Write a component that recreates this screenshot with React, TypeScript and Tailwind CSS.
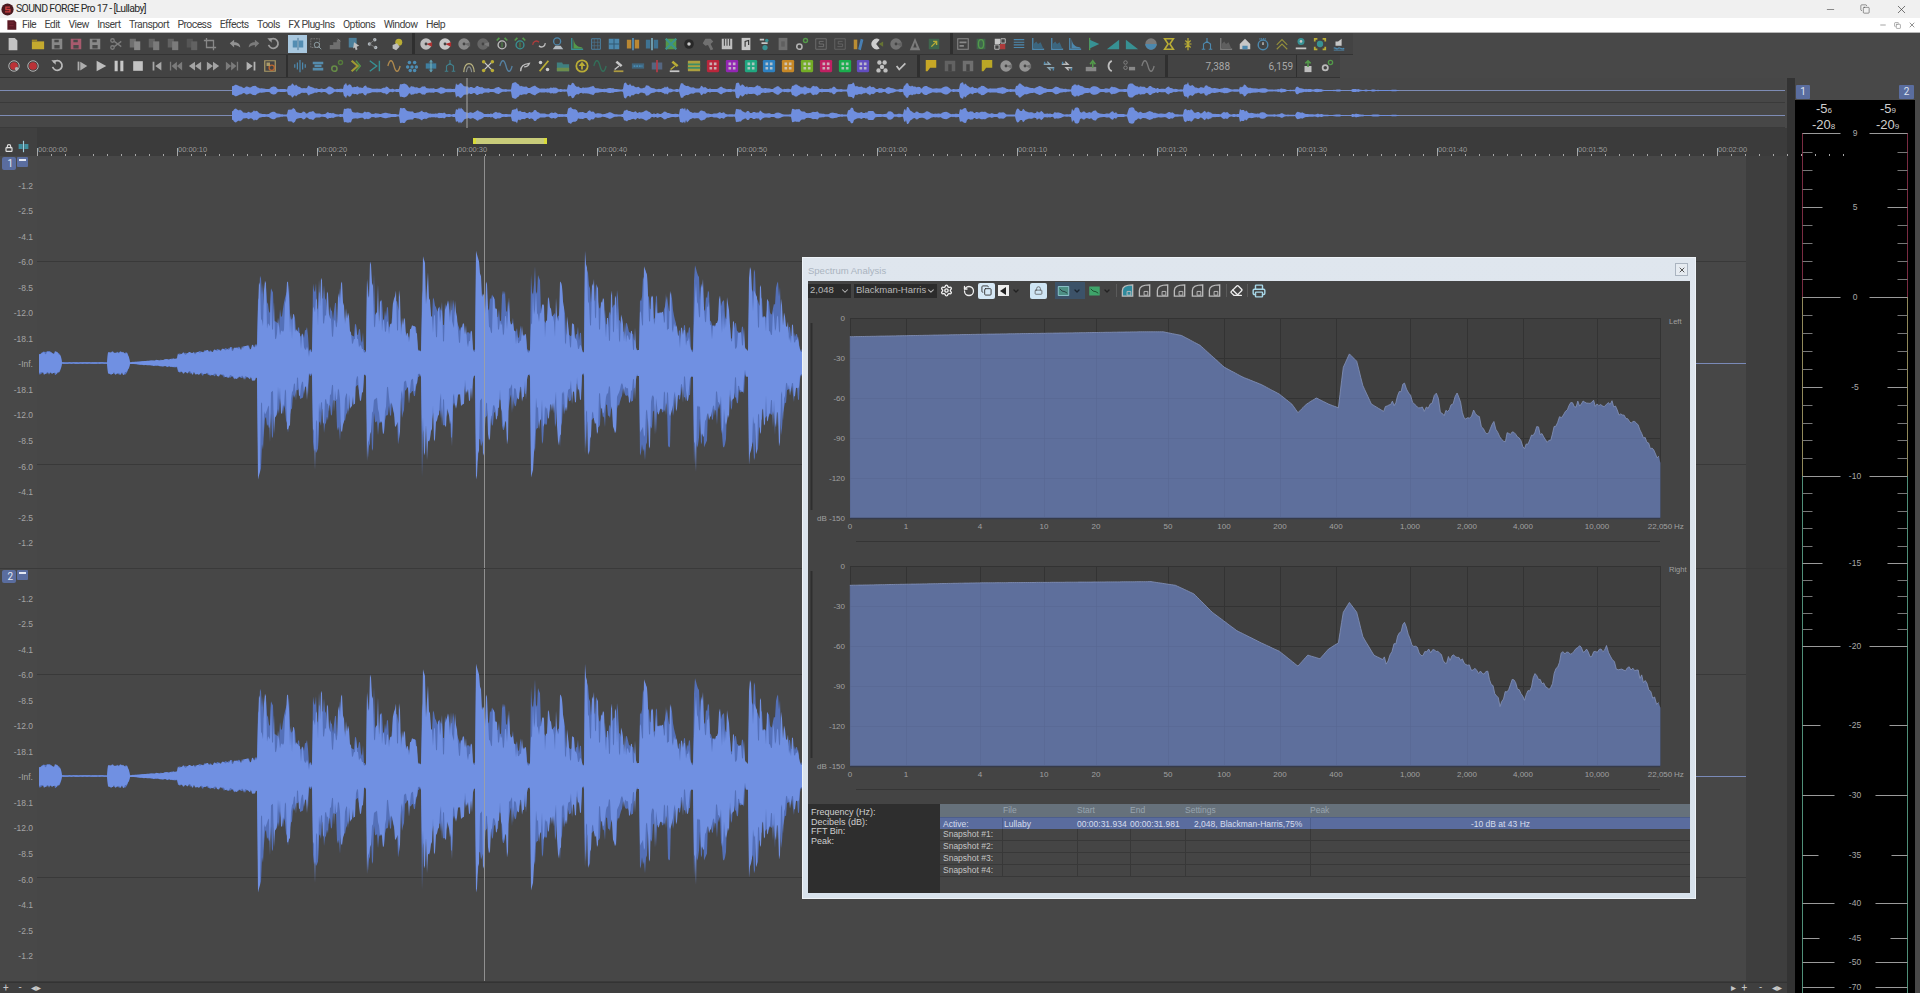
import type { ReactNode } from 'react'
import { ChevronDown, Copy, Eraser, Lock, Minus, Printer, RotateCcw, Settings, X } from 'lucide-react'

const menus = ['File', 'Edit', 'View', 'Insert', 'Transport', 'Process', 'Effects', 'Tools', 'FX Plug-Ins', 'Options', 'Window', 'Help']

const BLUE = '#4f9ac9'
const TEAL = '#35a5a8'
const GREEN = '#58b04c'
const YEL = '#d8c832'
const GRAY = '#8e8e8e'
const WHITE = '#e6e6e6'

function rng(seed: number) {
  let s = seed
  return () => {
    s = (s * 16807) % 2147483647
    return s / 2147483647
  }
}

// toolbar glyphs, drawn on a 16x16 box
function shape(k: string, c: string, d: string): ReactNode {
  const line = { fill: 'none', stroke: c, strokeWidth: 1.5 }
  switch (k) {
    case 'doc': return <path d="M3 1h7l3 3v11H3z" fill={c} />
    case 'folder': return <><path d="M1 5h14v9H1z" fill={c} /><path d="M1 3h6v2H1z" fill={d} /></>
    case 'save': return <><path d="M2 2h12v12H2z" fill={c} /><path d="M5 3h5v3H5zM5 9h6v4H5z" fill="#4a4a4a" /></>
    case 'cut': return <><circle cx="4" cy="4" r="2" {...line} /><circle cx="4" cy="12" r="2" {...line} /><path d="M6 5l8 6M6 11l8-6" {...line} /></>
    case 'pages': return <><path d="M2 2h7v10H2z" fill={d} /><path d="M7 5h7v10H7z" fill={c} /></>
    case 'crop': return <path d="M4 1v11h11M1 4h11v11" {...line} />
    case 'undo': return <path d="M2 7l5-4v3c4 0 7 2 7 6-2-2-4-3-7-3v3z" fill={c} />
    case 'redo': return <path d="M14 7L9 3v3c-4 0-7 2-7 6 2-2 4-3 7-3v3z" fill={c} />
    case 'loop': return <><path d="M4 4a5.500 5.500 0 1 1-1 5" fill="none" stroke={c} strokeWidth="2" /><path d="M1.500 1.500h5v5z" fill={c} /></>
    case 'split': return <><path d="M2 4h5v8H2zM9 4h5v8H9z" fill={c} /><path d="M8 1v14" stroke={d} /></>
    case 'search': return <><path d="M2 2h10v10H2z" fill="none" stroke={c} strokeDasharray="2 1" /><circle cx="9" cy="9" r="3" fill="none" stroke={d} /><path d="M11 11l3 3" stroke={d} /></>
    case 'steps': return <><path d="M2 14V9h4V6h4V3h4v11z" fill={c} /><path d="M11 2l3 3" stroke={d} /></>
    case 'boxarrow': return <><path d="M2 1h9v11H2z" fill={c} /><path d="M8 6l6 4-3 1 1 3-2 1-1-3-2 1z" fill={d} /></>
    case 'nodes': return <><circle cx="4" cy="8" r="2" fill={c} /><circle cx="10" cy="3" r="2" fill={c} /><circle cx="11" cy="12" r="2" fill={c} /><path d="M4 8l6-5M4 8l7 4" stroke={d} /></>
    case 'bulb': return <><circle cx="10" cy="6" r="4" fill={c} /><path d="M3 9l5-2 3 4-4 4-4-2z" fill={d} /></>
    case 'disc': return <><circle cx="8" cy="8" r="6.500" fill={c} /><path d="M8 8l7-2v5z" fill={d} /><circle cx="8" cy="8" r="1.600" fill="#444" /></>
    case 'wavebox': return <><path d="M2 4l3-3M14 4l-3-3" stroke={c} strokeWidth="2" /><circle cx="8" cy="9" r="4.500" fill="none" stroke={d} strokeWidth="1.500" /><path d="M8 6v6" stroke={c} /></>
    case 'arcs': return <><path d="M1 9a4 4 0 0 1 7-3" fill="none" stroke={c} strokeWidth="1.500" /><path d="M15 7a4 4 0 0 1-7 3" fill="none" stroke={d} strokeWidth="1.500" /></>
    case 'person': return <><circle cx="7" cy="5" r="4" fill="none" stroke={c} strokeWidth="1.500" /><path d="M2 14h12l-3-4H5z" fill={d} /></>
    case 'ramp': return <><path d="M2 1v13h13" {...line} /><path d="M4 2c1 7 4 9 10 10v1H4z" fill={d} /></>
    case 'grid': return <><path d="M3 2h10v12H3z" fill="none" stroke={c} /><path d="M6 2v12M10 2v12M3 6h10M3 10h10" stroke={d} strokeWidth=".8" /></>
    case 'block': return <><path d="M2 2h12v12H2z" fill={c} /><path d="M2 8h12M8 2v12" stroke={d} strokeWidth="1.200" /></>
    case 'wings': return <><path d="M1 3h5v10H1zM10 3h5v10h-5z" fill={c} /><path d="M8 1v14" stroke={d} strokeWidth="2" /></>
    case 'burst': return <path d="M8 1v14M5 4v8M11 4v8M2 6v4M14 6v4" stroke={c} strokeWidth="1.400" />
    case 'xbox': return <><path d="M2 2h12v12H2z" fill={d} /><path d="M2 2l12 12M14 2L2 14" stroke={c} strokeWidth="2.400" /></>
    case 'dot': return <><circle cx="8" cy="8" r="5.500" fill="#222" /><circle cx="8" cy="8" r="2" fill={c} /></>
    case 'figure': return <path d="M5 2h6l3 3-3 3 3 6-3 1-3-6-3 1-3-3z" fill={c} />
    case 'piano': return <><path d="M2 2h12v12H2z" fill={c} /><path d="M5 2v8M8 2v8M11 2v8" stroke="#444" strokeWidth="1.200" /></>
    case 'note': return <><path d="M3 1h10v14H3z" fill={c} /><path d="M7 11V5l4-1v5" fill="none" stroke="#333" strokeWidth="1.300" /></>
    case 'tree': return <><path d="M2 3h5M4 7h7" stroke={c} strokeWidth="2" /><circle cx="10" cy="4" r="2" fill={d} /><circle cx="8" cy="12" r="3" fill={d} /></>
    case 'chain': return <><circle cx="5" cy="11" r="3" fill="none" stroke={c} strokeWidth="1.800" /><circle cx="12" cy="4" r="2.300" fill="none" stroke={d} strokeWidth="1.600" /></>
    case 'sbox': return <><path d="M2 2h12v12H2z" fill="none" stroke={c} /><path d="M11 5H6v3h5v3H5" fill="none" stroke={c} /></>
    case 'gdoc': return <><path d="M3 1h10v14H3z" fill={c} /><path d="M6 5h4v6H6z" fill="#666" /></>
    case 'pencil': return <><path d="M2 3h4v11H2z" fill={c} /><path d="M7 14l3-12 3 1-3 12z" fill={d} /></>
    case 'pac': return <><path d="M11 3a6 6 0 1 0 0 10L7 8z" fill={c} /><path d="M10 8l5-3v6z" fill={d} /></>
    case 'atri': return <><path d="M8 1l6 14H2z" fill={c} /><path d="M8 6l2 6H6z" fill="#444" /></>
    case 'yelbox': return <><path d="M2 2h12v12H2z" fill={c} /><path d="M5 11l6-6M7 5h4v4" stroke={d} strokeWidth="1.600" fill="none" /></>
    case 'frame': return <><path d="M2 2h12v12H2z" fill="none" stroke={c} strokeWidth="1.200" /><path d="M4 5h8v2H4zM4 9h5v2H4z" fill={c} /></>
    case 'rings': return <><path d="M3 2h10v12H3z" fill={d} /><ellipse cx="8" cy="8" rx="3" ry="5" fill="none" stroke={c} strokeWidth="1.500" /></>
    case 'patch': return <><path d="M2 2h6v6H2z" fill={c} /><path d="M8 8h6v6H8z" fill={d} /><path d="M9 2h5v5H9zM2 9h5v5H2z" fill="none" stroke={c} /></>
    case 'hlines': return <path d="M2 3h12M2 6h12M2 9h12M2 12h12" stroke={c} strokeWidth="1.400" />
    case 'graph': return <><path d="M2 1v13h13" {...line} /><path d="M3 13V8l3-3 2 3 3-2 3 7z" fill={d} /></>
    case 'triright': return <><path d="M3 1v14" stroke={c} strokeWidth="1.500" /><path d="M3 3l11 5-11 5z" fill={d} /></>
    case 'up': return <path d="M1 14L15 3v11z" fill={c} />
    case 'down': return <path d="M1 3l14 11H1z" fill={c} />
    case 'half': return <><circle cx="8" cy="8" r="6.500" fill={c} /><path d="M1.500 8h13a6.500 6.500 0 0 1-13 0z" fill={d} /></>
    case 'hour': return <path d="M3 2h10l-4 6 4 6H3l4-6z" fill="none" stroke={c} strokeWidth="1.800" />
    case 'pinch': return <path d="M8 1v5M8 15v-5M4 8h8M5 4l3 3 3-3M5 12l3-3 3 3" fill="none" stroke={c} strokeWidth="1.400" />
    case 'house': return <><path d="M2 8l6-6 6 6v6H2z" fill={c} /><path d="M5 10h6v4H5z" fill={d} /></>
    case 'watch': return <><circle cx="8" cy="9" r="5.500" fill="none" stroke={c} strokeWidth="1.600" /><path d="M4 2h8" stroke={c} strokeDasharray="1 1" strokeWidth="2" /><path d="M8 6v3" stroke={d} strokeWidth="1.500" /></>
    case 'chev': return <path d="M2 9l6-6 6 6M2 14l6-6 6 6" fill="none" stroke={c} strokeWidth="1.300" />
    case 'man': return <><circle cx="8" cy="5" r="4" fill={d} /><path d="M2 12h12v2H2z" fill={c} /><circle cx="8" cy="5" r="1.500" fill={c} /></>
    case 'corners': return <><path d="M2 5V2h3M11 2h3v3M14 11v3h-3M5 14H2v-3" fill="none" stroke={c} strokeWidth="2" /><circle cx="8" cy="8" r="3.600" fill={d} /></>
    case 'speaker': return <><path d="M4 5h3l4-3v8H4z" fill={c} /><path d="M2 13c2-2 3 2 5 0s3 2 7 0" fill="none" stroke={d} strokeWidth="1.500" /><path d="M2 15h12" stroke={d} /></>
    case 'recs': return <><circle cx="8" cy="8" r="6" fill="none" stroke="#ddd" /><circle cx="8" cy="8" r="4.400" fill="#d92f35" /><circle cx="11" cy="11" r="2" fill="#ccc" /></>
    case 'rec': return <><circle cx="8" cy="8" r="6" fill="none" stroke="#ddd" /><circle cx="8" cy="8" r="4.400" fill="#d92f35" /></>
    case 'pstart': return <><path d="M3 3h2v10H3z" fill={c} /><path d="M6 3l8 5-8 5z" fill={c} /></>
    case 'play': return <path d="M3 2l11 6-11 6z" fill={c} />
    case 'pause': return <path d="M3 2h3.500v12H3zM9.500 2H13v12H9.500z" fill={c} />
    case 'stop': return <path d="M2.500 2.500h11v11h-11z" fill={c} />
    case 'first': return <path d="M3 3h2v10H3zM13 3v10L6 8z" fill={c} />
    case 'prevm': return <path d="M1 3h1.500v10H1zM9 3v10L3 8zM15 3v10L9 8z" fill={c} />
    case 'rew': return <path d="M8 3v10L1 8zM15 3v10L8 8z" fill={c} />
    case 'ff': return <path d="M8 3v10l7-5zM1 3v10l7-5z" fill={c} />
    case 'nextm': return <path d="M15 3h-1.500v10H15zM7 3v10l6-5zM1 3v10l6-5z" fill={c} />
    case 'last': return <path d="M13 3h-2v10h2zM3 3v10l7-5z" fill={c} />
    case 'boxo': return <><path d="M2 2h12v12H2z" fill="none" stroke={c} strokeWidth="1.400" /><circle cx="10" cy="10" r="3" fill="none" stroke="#d8702c" strokeWidth="1.600" /><path d="M4 4h4v4H4z" fill={c} /></>
    case 'bars': return <path d="M2 3h12v3H2zM2 10h12v3H2zM4 6.500h8V9H4z" fill={c} />
    case 'chevr': return <><path d="M3 2l7 6-7 6" fill="none" stroke={c} strokeWidth="2.400" /><path d="M8 2l5 6-5 6" fill="none" stroke={d} strokeWidth="1.400" /></>
    case 'rightbar': return <path d="M2 2l8 6-8 6M13 2v12" fill="none" stroke={c} strokeWidth="1.600" />
    case 'sine': return <path d="M1 8c2-8 5-8 7 0s5 8 7 0" fill="none" stroke={c} strokeWidth="1.500" />
    case 'dots': return <g fill={c}><circle cx="5" cy="4" r="2" /><circle cx="11" cy="4" r="2" /><circle cx="3" cy="9" r="2" /><circle cx="8" cy="9" r="2" /><circle cx="13" cy="9" r="2" /><circle cx="6" cy="13" r="2" /><circle cx="11" cy="13" r="2" /></g>
    case 'diamond': return <><path d="M8 1l3 3H5zM8 15l3-3H5z" fill={c} /><path d="M2 5h12v6H2z" fill={c} /><path d="M8 1v14" stroke="#9dd" /></>
    case 'fig2': return <path d="M8 1v4l4 3v6M8 5L4 8v6M2 14h4M10 14h4" fill="none" stroke={c} strokeWidth="1.300" />
    case 'arch': return <><path d="M2 15C3 2 13 2 14 15" fill="none" stroke={c} strokeWidth="1.300" /><path d="M5 15c1-8 5-8 6 0" fill="none" stroke={d} strokeWidth="1.300" /></>
    case 'xdots': return <g fill={c}><path d="M3 3l10 10M13 3L3 13" stroke={d} strokeWidth="1.600" /><circle cx="3" cy="3" r="2" /><circle cx="13" cy="13" r="2" /><circle cx="13" cy="3" r="2" /><circle cx="3" cy="13" r="2" /></g>
    case 'hook': return <path d="M3 14c0-6 3-8 10-9-1 3-3 4-6 4" fill="none" stroke={c} strokeWidth="1.600" />
    case 'percent': return <><path d="M3 14L13 2" stroke={c} strokeWidth="2" /><circle cx="4" cy="4" r="2" fill={d} /><circle cx="12" cy="12" r="2" fill={d} /></>
    case 'tfold': return <><path d="M1 4h6l1 2h7v8H1z" fill={c} /><path d="M1 10h14v4H1z" fill={d} /></>
    case 'upc': return <><circle cx="8" cy="8" r="6.500" fill="none" stroke={c} strokeWidth="2" /><path d="M8 3l4 5H9v4H7V8H4z" fill={c} /></>
    case 'gavel': return <><path d="M6 2l6 5-2 2-6-5z" fill={c} /><path d="M2 14h11" stroke={d} strokeWidth="2" /><path d="M8 8l-5 4" stroke={c} strokeWidth="1.500" /></>
    case 'bluebox': return <><path d="M1 5h14v6H1z" fill="#3f6f8f" /><path d="M3 8h10" stroke={c} strokeDasharray="2 1" strokeWidth="2" /></>
    case 'redbar': return <><path d="M2 4h12v8H2z" fill={d} /><path d="M8 1v14" stroke={c} strokeWidth="2" /></>
    case 'gbars': return <><path d="M1 2h14v12H1z" fill={c} /><path d="M1 6h14M1 10h14" stroke={d} strokeWidth="2" /></>
    case 'chip': return <><rect x="1" y="1" width="14" height="14" rx="1.500" fill={c} /><path d="M4 4h3v3H4zM9 4h3v3H9zM4 9h3v3H4zM9 9h3v3H9z" fill="#f4f4f4" opacity=".8" /></>
    case 'cluster': return <g fill={c}><circle cx="5" cy="4" r="2.500" /><circle cx="11" cy="4" r="2.500" /><circle cx="8" cy="9" r="2.500" /><circle cx="4" cy="13" r="2.500" /><circle cx="12" cy="13" r="2.500" /></g>
    case 'check': return <path d="M3 8l3 4 7-7" fill="none" stroke={c} strokeWidth="2" />
    case 'flag': return <path d="M2 1h12v9H7l-3 4h-2z" fill={c} />
    case 'gflag': return <><path d="M2 2h12v12H2z" fill={c} /><path d="M6 6h4v8H6z" fill="#444" /></>
    case 'arrows2': return <><path d="M2 6h7l-3-3M14 10H7l3 3" fill="none" stroke={c} strokeWidth="1.600" /><path d="M3 3v3M13 10v3" stroke={d} strokeWidth="1.600" /></>
    case 'garrow': return <><path d="M2 14V9h12v5z" fill={d} /><path d="M10 10V4M7 6l3-4 3 4" fill="none" stroke={c} strokeWidth="1.800" /></>
    case 'bracket': return <path d="M10 2C5 5 5 11 10 14" fill="none" stroke={c} strokeWidth="2" />
    case 'bpp': return <><circle cx="4" cy="4" r="2" fill="none" stroke={c} /><circle cx="4" cy="10" r="2" fill="none" stroke={c} /><path d="M8 9h7v4H8z" fill={c} /></>
    case 'gup': return <><path d="M4 8h8v7H4z" fill={c} /><path d="M8 9V2M5 5l3-3 3 3" fill="none" stroke={d} strokeWidth="1.800" /></>
    case 'gears': return <><circle cx="6" cy="10" r="3" fill="none" stroke={c} strokeWidth="2" /><circle cx="12" cy="4" r="2.400" fill="none" stroke={d} strokeWidth="1.500" /></>
    default: return null
  }
}

function Ic({ s, on }: { s: string; on?: boolean }) {
  const [k, c = GRAY, d = '#555'] = s.split('|')
  return (
    <div className={on ? 'w-[18.8px] h-[18px] flex items-center justify-center bg-[#a9c8df]' : 'w-[18.8px] h-[18px] flex items-center justify-center'}>
      <svg viewBox="0 0 16 16" className="w-[14px] h-[14px] opacity-80 blur-[0.4px]">{shape(k, c, d)}</svg>
    </div>
  )
}

function Group({ icons, className = '' }: { icons: string[]; className?: string }) {
  return (
    <div className={`flex items-center ${className}`}>
      {icons.map((s, i) => <Ic key={i} s={s} on={s.startsWith('split')} />)}
    </div>
  )
}

const Sep = ({ className = '' }: { className?: string }) => <div className={`h-full bg-[#2f2f2f] ${className}`} />

const tb1a = ['disc|#dcdcdc|#c8302f', 'disc|#e8e8e8|#d0282a', 'disc|#9a9a9a|#777', 'disc|#6e6e6e|#888', `wavebox|${GREEN}|#ddd`, `wavebox|${GREEN}|${TEAL}`, 'arcs|#c83a3a|#ddd', `person|${BLUE}|#cfd8e0`, `ramp|${TEAL}|${GREEN}`, `grid|${BLUE}|#4a7ea0`, `block|${BLUE}|#2f5f80`, 'wings|#d89a30|#5aa0d0', `wings|#3f7fa8|#7fc0d8`, `xbox|#3aa5a0|${GREEN}`, 'dot|#eee', 'figure|#7c7c7c', 'piano|#dedede', 'note|#e8e8e8', `tree|${WHITE}|${TEAL}`, 'gdoc|#7a7a7a', `chain|#cfcfcf|${GREEN}`, 'sbox|#7e7e7e', 'sbox|#6e6e6e', 'pencil|#d8a030|#4a8fd0', `pac|#f0f0f0|#6f7f30`, 'disc|#7e7e7e|#6a6a6a', 'atri|#8a8a8a', `yelbox|#3f6f4f|${YEL}`]
const tb1b = ['frame|#9a9a9a', `rings|${GREEN}|#3f6f4f`, 'patch|#e8e8e8|#c83a3a', `hlines|${BLUE}`, `graph|${BLUE}|#3a6f8f`, `graph|${BLUE}|#3a6f8f`, `ramp|${BLUE}|${BLUE}`, `triright|${GREEN}|${TEAL}`, `up|${TEAL}`, `down|${TEAL}`, `half|#8a8a8a|${BLUE}`, `hour|${YEL}`, `pinch|${YEL}`, `fig2|${BLUE}`, 'graph|#8a8a8a|#666', `house|#e8e8e8|${BLUE}`, `watch|${BLUE}|#eee`, `chev|#a8a23a`, `man|#e8e8e8|${TEAL}`, `corners|${YEL}|${TEAL}`, `speaker|#e8e8e8|${BLUE}`]
const tb2a = [`burst|${BLUE}`, `bars|#5a9fc8`, `chain|#6f9f48|#5a8a3a`, `chevr|#b8b030|${GREEN}`, `rightbar|${TEAL}`, 'sine|#c89a50', `dots|#4f9fd0`, `diamond|#3f8fb8`, `fig2|#3f8f9f`, 'arch|#d8d090|#9aa0a0', `xdots|#d8c832|#e8e8e8`, 'sine|#5a90b8', 'hook|#dddddd', `percent|#d8c832|#eeeeee`, `tfold|#3f8f8f|#78a050`, `upc|#d8c832`, 'sine|#2f7a5f', 'gavel|#e8e8e8|#c8b040', 'bluebox|#4a9fd0', 'redbar|#d03a4a|#5a6f90', 'gavel|#d8c832|#e8e8e8', `gbars|#c8b840|#3f9f6f`, 'chip|#d81f3a', 'chip|#a820d0', 'chip|#18c090', 'chip|#2890e0', 'chip|#e89a20', 'chip|#80c820', 'chip|#e0186a', 'chip|#10c850', 'chip|#6a50e0', 'cluster|#e0e0e0', 'check|#e0e0e0']

const timeLabels = ['00:00:00', '00:00:10', '00:00:20', '00:00:30', '00:00:40', '00:00:50', '00:01:00', '00:01:10', '00:01:20', '00:01:30', '00:01:40', '00:01:50', '00:02:00']

function beatEnv(x: number) {
  if (x < 39) return 0
  if (x < 62) return 12 * Math.min(1, (62 - x) / 5 + 0.3)
  if (x < 108) return 0.8
  if (x < 130) return 12 * Math.min(1, (130 - x) / 5 + 0.3)
  if (x < 178) return 1 + ((x - 130) / 48) * 4
  if (x < 258) return 10 + ((x - 178) / 80) * 9
  const p = ((x - 258) % 54.5) / 54.5
  const a = 24 + 80 * Math.exp(-2.4 * p) + 30 * Math.exp(-(((p - 0.55) / 0.08) ** 2))
  return p > 0.93 ? a * 0.45 : a
}

// a spiky outline around a centre line: each peak holds for a couple of pixels
function wavePath(seed: number, cy: number, lo: number) {
  const r = rng(seed)
  let top = `M39 ${cy}`
  let bot = ''
  let h1 = 1
  let h2 = 1
  let left = 0
  for (let x = 39; x < 830; x += 1) {
    const a = beatEnv(x)
    if (left <= 0) {
      const v = a > 20 ? lo : 0.72
      h1 = v + (1 - v) * r()
      h2 = v + (1 - v) * r()
      if (a > 20 && r() > 0.86) h1 = 1.08
      if (a > 20 && r() > 0.86) h2 = 1.12
      left = 1 + Math.floor(r() * 2)
    }
    left--
    top += `L${x} ${(cy - a * h1).toFixed(1)}`
    bot = `L${x} ${(cy + a * h2).toFixed(1)}` + bot
  }
  return `${top}${bot}Z`
}

function overviewPath(seed: number) {
  const r = rng(seed)
  const cy = 12.5
  let top = 'M232 12.5'
  let bot = ''
  let h = 1
  let left = 0
  for (let x = 232; x < 1400; x += 1) {
    const p = ((x - 232) % 56) / 56
    const fade = x > 1240 ? Math.max(0.22, (1400 - x) / 220) : 1
    const a = (1.4 + 6 * Math.exp(-3.2 * p) + 2.4 * Math.max(0, Math.sin(p * 19))) * fade
    if (left <= 0) {
      h = 0.55 + 0.45 * r()
      left = 1 + Math.floor(r() * 3)
    }
    left--
    top += `L${x} ${(cy - a * h).toFixed(1)}`
    bot = `L${x} ${(cy + a * h).toFixed(1)}` + bot
  }
  return `${top}${bot}Z`
}

function Overview({ seed }: { seed: number }) {
  return (
    <svg viewBox="0 0 1785 25" className="block w-[1785px] h-[25px] bg-[#474747]">
      <path d="M0 24.500H1785" stroke="#3a3a3a" />
      <path d="M0 12.500H1785" stroke="#7e8cb5" strokeWidth="1" />
      <path d={overviewPath(seed)} fill="#6f8ede" className="blur-[0.4px]" />
      <path d="M467 0V25" stroke="#a8a8a8" strokeWidth="1" />
    </svg>
  )
}

const dbLabels = ['-1.2', '-2.5', '-4.1', '-6.0', '-8.5', '-12.0', '-18.1', '-Inf.', '-18.1', '-12.0', '-8.5', '-6.0', '-4.1', '-2.5', '-1.2']

function Track({ n, seed }: { n: number; seed: number }) {
  return (
    <div className="flex h-[413px] border-b border-[#3a3a3a]">
      <div className="w-[37px] shrink-0 bg-[#484848]">
        <div className="flex items-start gap-[1px] pl-[2px] pt-[1px]">
          <div className="w-[14px] h-[13px] bg-[#5a6d9f] rounded-[2px] text-[10px] leading-[13px] text-[#e4e8f2] text-right pr-[3px]">{n}</div>
          <div className="w-[11px] h-[10px] bg-[#5a6d9f] rounded-[1px] flex justify-center pt-[2px]"><div className="w-[7px] h-[2px] bg-[#e4e8f2]" /></div>
        </div>
        <div className="flex flex-col items-end pr-[4px] pt-[3.5px] text-[8.5px] leading-[25.55px] text-[#a4a4a4] font-['Liberation_Sans',sans-serif]">
          {dbLabels.map((l, i) => <span key={i}>{l}</span>)}
        </div>
      </div>
      <svg viewBox="37 0 1709 412" className="block w-[1709px] h-[412px] bg-[#474747]">
        <path d="M37 105.500H1746M37 308.500H1746" stroke="#393939" />
        <g className="blur-[0.4px]">
          <path d={wavePath(seed, 207, 0.6)} fill="#5470b8" />
          <path d={wavePath(seed + 57, 207, 0.38)} fill="#7090e2" />
        </g>
        <path d="M1690 207.500H1746" stroke="#7a8ab8" />
        <path d="M484.500 0V412" stroke="#a2a2a2" strokeOpacity=".8" />
      </svg>
      <div className="flex-1 bg-[#3e3e3e]" />
    </div>
  )
}

const freqTicks: [string, number][] = [['0', 850], ['1', 906], ['4', 980], ['10', 1044], ['20', 1096], ['50', 1168], ['100', 1224], ['200', 1280], ['400', 1336], ['1,000', 1410], ['2,000', 1467], ['4,000', 1523], ['10,000', 1597], ['22,050', 1660]]
const dbTicks = ['0', '-30', '-60', '-90', '-120', 'dB -150']

const curveTop: number[][] = [[694, 275], [800, 273], [930, 271], [950, 271], [965, 274], [980, 282], [1000, 300], [1015, 308], [1030, 314], [1045, 322], [1055, 330], [1060, 337], [1067, 330], [1075, 325], [1085, 330], [1093, 333], [1097, 300], [1102, 289], [1108, 295], [1113, 315], [1120, 330], [1130, 336], [1140, 328], [1147, 310], [1152, 325], [1160, 335], [1168, 332], [1173, 322], [1178, 340], [1185, 332], [1190, 322], [1197, 345], [1205, 335], [1213, 355], [1220, 347], [1228, 360], [1235, 350], [1245, 365], [1255, 350], [1265, 360], [1272, 345], [1280, 332], [1290, 330], [1300, 328], [1310, 335], [1315, 328], [1325, 340], [1335, 345], [1345, 360], [1352, 370], [1356, 378]]
const curveBottom: number[][] = [[694, 478], [800, 476], [940, 475], [960, 478], [975, 485], [990, 500], [1010, 515], [1030, 525], [1045, 532], [1060, 544], [1068, 535], [1078, 538], [1085, 530], [1093, 525], [1097, 500], [1102, 492], [1108, 500], [1113, 520], [1122, 535], [1132, 540], [1140, 525], [1147, 508], [1153, 525], [1162, 535], [1170, 530], [1180, 540], [1190, 535], [1200, 545], [1215, 550], [1225, 575], [1235, 555], [1245, 570], [1255, 550], [1265, 565], [1275, 535], [1290, 530], [1300, 535], [1312, 528], [1320, 545], [1335, 545], [1345, 560], [1356, 578]]

function curvePath(pts: number[][], originY: number, seed: number, bottom: number) {
  const r = rng(seed)
  const k = 1920 / 1568
  let d = ''
  for (let i = 0; i < pts.length - 1; i++) {
    const [x0, y0] = pts[i]
    const [x1, y1] = pts[i + 1]
    const steps = Math.max(1, Math.round((x1 - x0) / 1.5))
    for (let s = 0; s < steps; s++) {
      const t = s / steps
      const x = x0 + (x1 - x0) * t
      const noise = x > 1130 ? (r() - 0.5) * 7 : 0
      const px = x * k - 808
      const py = (y0 + (y1 - y0) * t) * k - originY + noise
      d += `${d ? 'L' : 'M'}${px.toFixed(1)} ${py.toFixed(1)}`
    }
  }
  const last = pts[pts.length - 1]
  const xEnd = (last[0] * k - 808).toFixed(1)
  const area = `${d}L${xEnd} ${(last[1] * k - originY).toFixed(1)}L${xEnd} ${bottom}L42 ${bottom}Z`
  return { line: d, area }
}

function Plot({ y0, origin, pts, seed, side }: { y0: number; origin: number; pts: number[][]; seed: number; side: string }) {
  const { line, area } = curvePath(pts, origin, seed, y0 + 200)
  const clipId = `fill-${seed}`
  return (
    <svg viewBox="0 0 882 252" className="block w-[882px] h-[252px] font-['Liberation_Sans',sans-serif]">
      <defs><clipPath id={clipId}><path d={area} /></clipPath></defs>
      <rect x="42" y={y0} width="810" height="200" fill="#3f3f3f" />
      <g stroke="#333">
        {[0, 40, 80, 120, 160, 200].map((v) => <path key={v} d={`M42 ${y0 + v + 0.5}H852`} />)}
        {freqTicks.map(([l, x]) => <path key={l} d={`M${x - 808 + 0.5} ${y0}V${y0 + 200}`} />)}
      </g>
      <path d={area} fill="#5e6f9c" />
      <g stroke="#566590" clipPath={`url(#${clipId})`} strokeOpacity=".5">
        {[40, 80, 120, 160].map((v) => <path key={v} d={`M42 ${y0 + v + 0.5}H852`} />)}
        {freqTicks.map(([l, x]) => <path key={l} d={`M${x - 808 + 0.5} ${y0}V${y0 + 199}`} />)}
      </g>
      <path d={line} fill="none" stroke="#8493bb" strokeWidth=".8" />
      <path d={`M42 ${y0 + 200.5}H852`} stroke="#353a4a" strokeWidth="1.500" />
      <g fill="#a0a0a0" fontSize="8">
        {dbTicks.map((l, i) => <text key={l} x="37" y={y0 + i * 40 + 3} textAnchor="end">{l}</text>)}
        {freqTicks.map(([l, x]) => <text key={l} x={x - 808} y={y0 + 211} textAnchor="middle">{l}</text>)}
        <text x="866" y={y0 + 211}>Hz</text>
        <text x="861" y={y0 + 6} fontSize="7.5">{side}</text>
      </g>
      <path d={`M48 ${y0 + 223.500}H852`} stroke="#353535" />
      <path d={`M3.500 ${y0 + 5}V${y0 + 192}`} stroke="#2e2e2e" strokeWidth="2" />
    </svg>
  )
}

const tableCols = 'grid grid-cols-[62px_75px_53px_55px_125px_1fr]'

function SnapshotRow({ label }: { label: string }) {
  return (
    <div className={`${tableCols} h-[12px] border-b border-[#383838] text-[#c4c4c4]`}>
      <div className="pl-[3px] leading-[11px]">{label}</div>
      {[0, 1, 2, 3, 4].map((i) => <div key={i} className="border-l border-[#383838]" />)}
    </div>
  )
}

function SpectrumWindow() {
  return (
    <div className="absolute left-[802px] top-[257px] w-[894px] h-[642px] flex flex-col border border-[#eef3f8] bg-gradient-to-b from-[#dfe6ee] to-[#d8e2ec] px-[5px] pb-[5px] font-['Liberation_Sans',sans-serif]">
      <div className="h-[23px] flex items-center justify-between shrink-0">
        <span className="text-[9.5px] text-[#aab4bf] pt-[4px]">Spectrum Analysis</span>
        <div className="w-[13px] h-[13px] mr-[2px] border border-[#aab4c0] bg-[#e6ebf1] flex items-center justify-center"><X size={8} className="text-[#555]" strokeWidth={3} /></div>
      </div>
      <div className="flex-1 bg-[#444444] flex flex-col min-h-0">
        <div className="h-[19px] flex items-center shrink-0 text-[9.5px] text-[#b8b8b8] whitespace-nowrap">
          <div className="w-[43px] h-[14px] bg-[#2b2b2b] flex items-center justify-between pl-[2px] pr-[1px]">2,048<ChevronDown size={10} strokeWidth={2.5} /></div>
          <div className="w-[83px] h-[14px] ml-[3px] bg-[#2b2b2b] flex items-center justify-between pl-[2px] pr-[1px]">Blackman-Harris<ChevronDown size={10} strokeWidth={2.5} /></div>
          <Settings size={13} strokeWidth={2.6} className="ml-[3px] text-[#eee]" />
          <RotateCcw size={12} strokeWidth={2.6} className="ml-[10px] text-[#eee]" />
          <div className="w-[17px] h-[16px] ml-[3px] bg-[#d6e8f5] flex items-center justify-center rounded-[2px]"><Copy size={11} className="text-[#333]" /></div>
          <div className="w-[11px] h-[11px] ml-[3px] bg-[#eeeeee] flex items-center"><div className="w-0 h-0 border-y-[4px] border-y-transparent border-r-[6px] border-r-[#222] ml-[2px]" /></div>
          <ChevronDown size={8} className="ml-[3px] text-[#222]" strokeWidth={4} />
          <div className="w-[17px] h-[16px] ml-[10px] bg-[#cfe5f4] flex items-center justify-center rounded-[2px]"><Lock size={9} className="text-[#555]" /></div>
          <div className="w-[30px] h-[17px] ml-[8px] bg-[#3c5268] flex items-center pl-[2px] gap-[3px]">
            <svg viewBox="0 0 16 16" className="w-[13px] h-[12px]"><path d="M1 2h14v12H1z" fill="#4d8f84" stroke="#a0d8e0" /><path d="M3 5l3 3 4 1 3 2" fill="none" stroke="#1d2a30" /></svg>
            <ChevronDown size={8} className="text-[#1b2530]" strokeWidth={4} />
          </div>
          <svg viewBox="0 0 16 16" className="w-[13px] h-[12px] ml-[3px]"><path d="M1 2h14v12H1z" fill="#3fa46a" /><path d="M3 5l3 3 4 1 3 2" fill="none" stroke="#13351f" /></svg>
          <ChevronDown size={8} className="ml-[2px] text-[#222]" strokeWidth={4} />
          <div className="w-[1px] h-[13px] ml-[5px] bg-[#5a5a5a]" />
          <div className="flex ml-[3px] gap-[1.400px]">
            {[0, 1, 2, 3, 4, 5].map((i) => (
              <svg key={i} viewBox="0 0 16 16" className="w-[16px] h-[15px] opacity-85 blur-[0.3px]">
                <path d="M2 14V8c0-4 4-6 11-6v12z" fill={i === 0 ? '#2c97ad' : 'none'} stroke="#d0d0d0" strokeWidth="1.400" />
                <path d="M7 13V9h4v4z" fill="none" stroke="#d0d0d0" />
              </svg>
            ))}
          </div>
          <div className="w-[1px] h-[13px] ml-[3px] bg-[#5a5a5a]" />
          <Eraser size={13} className="ml-[3px] text-[#eee]" strokeWidth={2.4} />
          <div className="w-[1px] h-[13px] ml-[4px] bg-[#5a5a5a]" />
          <Printer size={14} className="ml-[4px] text-[#a8d8e8]" strokeWidth={2.4} />
        </div>
        <Plot y0={18} origin={300} pts={curveTop} seed={77} side="Left" />
        <Plot y0={14} origin={552} pts={curveBottom} seed={311} side="Right" />
        <div className="flex-1 flex text-[8.5px] min-h-0">
          <div className="w-[132px] bg-[#2e2e2e] pl-[3px] pt-[4px] leading-[9.700px] text-[#cfcfcf] text-[9px]">
            <div>Frequency (Hz):</div>
            <div>Decibels (dB):</div>
            <div>FFT Bin:</div>
            <div>Peak:</div>
          </div>
          <div className="flex-1 flex flex-col bg-[#454545]">
            <div className={`${tableCols} h-[13px] bg-[#66717b] text-[#98a4ae] leading-[13px]`}>
              <div />
              <div className="pl-[1px]">File</div>
              <div>Start</div>
              <div>End</div>
              <div>Settings</div>
              <div>Peak</div>
            </div>
            <div className={`${tableCols} h-[12px] bg-[#5a6c9e] text-[#d6dcec] leading-[12px] border-t border-[#4d5e8c]`}>
              <div className="pl-[3px]">Active:</div>
              <div className="pl-[1px] border-l border-[#4d5e8c]">Lullaby</div>
              <div className="whitespace-nowrap">00:00:31.934</div>
              <div className="whitespace-nowrap">00:00:31.981</div>
              <div className="pl-[9px] whitespace-nowrap">2,048, Blackman-Harris,75%</div>
              <div className="text-center border-l border-[#4d5e8c]">-10 dB at 43 Hz</div>
            </div>
            {[1, 2, 3, 4].map((n) => <SnapshotRow key={n} label={`Snapshot #${n}:`} />)}
          </div>
        </div>
      </div>
    </div>
  )
}

// the reference has -70 half under the window edge, it is kept just inside here
const meterMajor: [string, number, number][] = [['9', 133, 38], ['5', 207, 20], ['0', 297, 38], ['-5', 387, 20], ['-10', 476, 38], ['-15', 563, 20], ['-20', 646, 38], ['-25', 725, 18], ['-30', 795, 32], ['-35', 855, 16], ['-40', 903, 32], ['-45', 938, 17], ['-50', 962, 32], ['-70', 987, 32]]

function Meter() {
  const minors: number[] = []
  for (let i = 0; i < 6; i++) {
    const a = meterMajor[i][1]
    const b = meterMajor[i + 1][1]
    const steps = i === 0 ? 4 : 5
    for (let s = 1; s < steps; s++) minors.push(a + ((b - a) * s) / steps)
  }
  const L = 7.5
  const R = 112.5
  return (
    <svg viewBox="0 0 120 893" className="block w-[120px] h-[893px] bg-black font-['Liberation_Sans',sans-serif]">
      <g fill="#cfcfcf" fontSize="13">
        <text x="21" y="13">-5<tspan fontSize="8">6</tspan></text>
        <text x="85" y="13">-5<tspan fontSize="8">9</tspan></text>
        <text x="17" y="29">-20<tspan fontSize="8">8</tspan></text>
        <text x="81" y="29">-20<tspan fontSize="8">9</tspan></text>
      </g>
      <path d={`M${L} 33V197M${R} 33V197`} stroke="#7a2c42" />
      <path d={`M${L} 197V376M${R} 197V376`} stroke="#90895a" />
      <path d={`M${L} 376V893M${R} 376V893`} stroke="#4f8f78" />
      <g stroke="#777">
        {minors.map((y, i) => <path key={i} d={`M${L} ${Math.round(y - 100) + 0.5}h10M${R} ${Math.round(y - 100) + 0.5}h-10`} />)}
      </g>
      <g stroke="#9a9a9a">
        {meterMajor.map(([l, y, w]) => <path key={l} d={`M${L} ${y - 100 + 0.5}h${w}M${R} ${y - 100 + 0.5}h-${w}`} />)}
      </g>
      <g fill="#a8a8a8" fontSize="8.5" textAnchor="middle">
        {meterMajor.map(([l, y]) => <text key={l} x="60" y={y - 100 + 3}>{l}</text>)}
      </g>
    </svg>
  )
}

export default function App() {
  return (
    <div className="relative w-[1920px] h-[993px] overflow-hidden bg-[#484848] font-['Roboto',sans-serif]">
      <div className="h-[18px] bg-[#f0f0f0] flex items-center">
        <svg viewBox="0 0 16 16" className="w-[13px] h-[13px] ml-[1px]"><circle cx="8" cy="8" r="7.500" fill="#4a1a20" /><path d="M11 5H6v3h5v3H5" fill="none" stroke="#d04040" strokeWidth="1.600" /></svg>
        <span className="ml-[2px] text-[10.5px] leading-none tracking-[-0.65px] text-[#2a2a2a]">SOUND FORGE Pro 17 - [Lullaby]</span>
        <div className="ml-auto flex items-center text-[#333]">
          <Minus size={11} strokeWidth={1.2} className="mr-[24px]" />
          <Copy size={10} strokeWidth={1.2} className="mr-[25px]" />
          <X size={13} strokeWidth={1.2} className="mr-[12px]" />
        </div>
      </div>
      <div className="h-[15px] bg-white flex items-center border-b border-[#b8b8b8]">
        <svg viewBox="0 0 16 16" className="w-[11px] h-[14px] ml-[6px]"><path d="M2 1h10l3 3v11H2z" fill="#5a1a24" /><path d="M5 5h6M5 9h6" stroke="#8a3040" /></svg>
        <div className="flex items-center ml-[5px] gap-[8.5px] text-[10.5px] leading-none tracking-[-0.6px] text-[#444]">
          {menus.map((m) => <span key={m}>{m}</span>)}
        </div>
        <div className="ml-auto flex items-center gap-[7px] mr-[4px] text-[#777]">
          <Minus size={8} strokeWidth={2} />
          <Copy size={7} strokeWidth={2} />
          <X size={8} strokeWidth={2.4} />
        </div>
      </div>

      <div className="h-[22px] w-[1353px] flex items-center bg-[#434343] border-b border-[#333]">
        <Group className="ml-[4px]" icons={['doc|#e4e4e4']} />
        <Group className="ml-[6px]" icons={['folder|#e5c32a|#b89a20', 'save|#9a9a9a', 'save|#c06078', 'save|#9a9a9a']} />
        <Group className="ml-[3px]" icons={['cut|#8a8a8a', 'pages|#9a9a9a|#7a7a7a', 'pages|#8a8a8a|#6a6a6a', 'pages|#8a8a8a|#6a6a6a', 'pages|#6a6a6a|#5a5a5a', 'crop|#9a9a9a']} />
        <Group className="ml-[6px]" icons={['undo|#a8a8a8', 'redo|#8a8a8a', 'loop|#b4b4b4']} />
        <Group className="ml-[6px]" icons={['split|#3f7fa8|#2a5a7a', 'search|#8a8a8a|#a8c0c8', 'steps|#7a7a7a|#999', 'boxarrow|#4f8fb0|#ddd', 'nodes|#cfd8df|#8a8a8a']} />
        <Group className="ml-[5px]" icons={['bulb|#d8c832|#dcdcdc']} />
        <Sep className="w-[3px] ml-[6px]" />
        <Group className="ml-[2px]" icons={tb1a} />
        <Sep className="w-[3px] ml-[7px]" />
        <Group icons={tb1b} />
      </div>
      <div className="h-[23px] w-[1340px] flex items-center bg-[#434343] border-b border-[#333]">
        <Group className="ml-[5px]" icons={['recs', 'rec']} />
        <Group className="ml-[5px]" icons={['loop|#d8d8d8']} />
        <Group className="ml-[6px]" icons={['pstart|#c8c8c8', 'play|#dcdcdc', 'pause|#e8e8e8', 'stop|#e4e4e4', 'first|#c0c0c0', 'prevm|#8a8a8a', 'rew|#bbbbbb', 'ff|#bbbbbb', 'nextm|#8a8a8a', 'last|#d0d0d0', 'boxo|#c4b070']} />
        <Sep className="w-[2px] ml-[7px]" />
        <Group className="ml-[2px]" icons={tb2a} />
        <Sep className="w-[3px] ml-[7px]" />
        <Group className="ml-[1px]" icons={['flag|#e8c020', 'gflag|#6a6a6a', 'gflag|#7a7a7a', 'flag|#d8c020', 'disc|#a8a8a8|#7a7a7a', 'disc|#a8a8a8|#7a7a7a']} />
        <Group className="ml-[5px]" icons={[`arrows2|#9fbfd0|${BLUE}`, `arrows2|#dddddd|${BLUE}`]} />
        <Group className="ml-[5px]" icons={[`garrow|${GREEN}|#9a9a9a`, 'bracket|#dedede', 'bpp|#9a9a9a', 'sine|#8a8a8a']} />
        <Sep className="w-[3px] ml-[8px]" />
        <div className="w-[128px] flex items-center text-[10px] text-[#a8a8a8]">
          <span className="w-[62px] text-right">7,388</span>
          <span className="w-[63px] text-right">6,159</span>
        </div>
        <Sep className="w-[1px]" />
        <Group className="ml-[2px]" icons={[`gup|#dddddd|${GREEN}`, `gears|#d8d8d8|${GREEN}`]} />
      </div>

      <div className="flex h-[915px]">
        <div className="w-[1787px] shrink-0 flex flex-col">
          <div className="h-[50px] w-[1785px]">
            <Overview seed={4021} />
            <Overview seed={9127} />
          </div>
          <div className="h-[29px] flex bg-[#3b3b3b]">
            <div className="w-[37px] shrink-0 flex items-end pb-[3px] pl-[5px] gap-[4px] bg-[#404040]">
              <Lock size={8} strokeWidth={3.5} className="text-[#e0e0e0] mb-[1px]" />
              <svg viewBox="0 0 16 16" className="w-[13px] h-[13px]"><path d="M2 5h5v6H2zM9 5h5v6H9z" fill="#3f8f9f" /><path d="M8 1v14" stroke="#9fd0e0" strokeWidth="1.400" /></svg>
            </div>
            <div className="relative flex-1 flex">
              {timeLabels.map((t) => (
                <div key={t} className="w-[140px] shrink-0 flex flex-col justify-end">
                  <span className="text-[7.5px] leading-none text-[#989898] pl-[1px] font-['Liberation_Sans',sans-serif]">{t}</span>
                  <div className="flex h-[3px] items-end">
                    {[0, 1, 2, 3, 4, 5, 6, 7, 8, 9].map((i) => (
                      <div key={i} className="w-[14px] shrink-0">
                        <div className={i === 0 ? 'w-[1px] h-[8px] -mt-[5px] bg-[#a8a8a8]' : 'w-[1px] h-[2px] bg-[#a8a8a8]'} />
                      </div>
                    ))}
                  </div>
                </div>
              ))}
              <div className="absolute left-[436px] top-[10px] w-[74px] h-[6px] bg-[#c9cc7a] border-x-[3px] border-[#d8dc3a]" />
            </div>
          </div>
          <Track n={1} seed={1291} />
          <Track n={2} seed={1291} />
          <div className="flex-1 flex items-center bg-[#3f3f3f] border-t border-[#333] text-[10px] leading-none text-[#c8c8c8]">
            <span className="ml-[3px]">+</span>
            <span className="ml-[10px]">-</span>
            <span className="ml-[10px]">◂▸</span>
            <span className="ml-auto mr-[6px]">▸</span>
            <span className="mr-[12px]">+</span>
            <span className="mr-[10px]">-</span>
            <span className="mr-[5px]">◂▸</span>
          </div>
        </div>
        <div className="w-[133px] flex">
          <div className="w-[8px] bg-[#333333]" />
          <div className="w-[120px] flex flex-col">
            <div className="h-[22px] flex items-end justify-between pb-[1px] px-[1px]">
              <div className="w-[14px] h-[14px] bg-[#5a6d9f] text-[10px] leading-[14px] text-[#dfe4f0] text-center rounded-[1px]">1</div>
              <div className="w-[15px] h-[14px] bg-[#5a6d9f] text-[10px] leading-[14px] text-[#dfe4f0] text-center rounded-[1px]">2</div>
            </div>
            <Meter />
          </div>
        </div>
      </div>

      <SpectrumWindow />
    </div>
  )
}
